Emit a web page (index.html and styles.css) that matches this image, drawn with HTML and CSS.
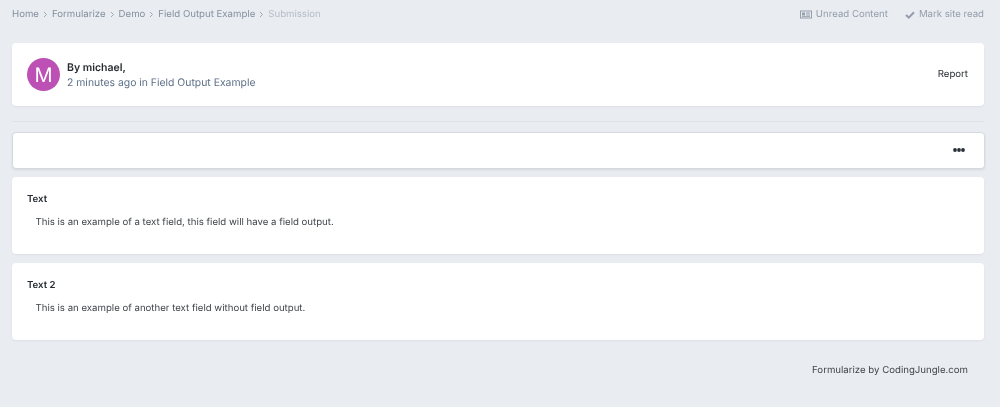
FILE: index.html
```html
<!DOCTYPE html>
<html lang="en">
<head>
<meta charset="utf-8">
<title>Submission</title>
<link rel="stylesheet" href="styles.css">
</head>
<body>
<div class="page">
  <nav class="topbar">
    <ul class="crumbs">
      <li class="crumb">Home</li>
      <li class="sep"><svg viewBox="0 0 6 8" width="5" height="7"><path d="M1.2 1 L4.2 4 L1.2 7" fill="none" stroke="currentColor" stroke-width="1"/></svg></li>
      <li class="crumb">Formularize</li>
      <li class="sep"><svg viewBox="0 0 6 8" width="5" height="7"><path d="M1.2 1 L4.2 4 L1.2 7" fill="none" stroke="currentColor" stroke-width="1"/></svg></li>
      <li class="crumb">Demo</li>
      <li class="sep"><svg viewBox="0 0 6 8" width="5" height="7"><path d="M1.2 1 L4.2 4 L1.2 7" fill="none" stroke="currentColor" stroke-width="1"/></svg></li>
      <li class="crumb">Field Output Example</li>
      <li class="sep"><svg viewBox="0 0 6 8" width="5" height="7"><path d="M1.2 1 L4.2 4 L1.2 7" fill="none" stroke="currentColor" stroke-width="1"/></svg></li>
      <li class="crumb current">Submission</li>
    </ul>
    <ul class="actions">
      <li class="action">
        <svg class="icon-news" viewBox="0 0 12 9" width="12" height="9"><path d="M0 0.5h12v8h-12z M1 1.5v6h10v-6z" fill="currentColor" fill-rule="evenodd"/><rect x="2" y="2.5" width="3" height="3" fill="currentColor"/><rect x="6" y="2.5" width="4" height="1" fill="currentColor"/><rect x="6" y="4.5" width="4" height="1" fill="currentColor"/><rect x="2" y="6.2" width="8" height="0.8" fill="currentColor"/></svg>
        Unread Content
      </li>
      <li class="action">
        <svg class="icon-check" viewBox="0 0 10 8" width="10" height="8"><path d="M1 4 L3.8 6.6 L9 1.2" fill="none" stroke="currentColor" stroke-width="2"/></svg>
        Mark site read
      </li>
    </ul>
  </nav>

  <section class="card author">
    <div class="avatar">M</div>
    <div class="author-text">
      <div class="by">By michael,</div>
      <div class="meta">2 minutes ago in Field Output Example</div>
    </div>
    <div class="report">Report</div>
  </section>

  <hr class="rule">

  <div class="toolbar">
    <svg class="dots" viewBox="0 0 12 4" width="12" height="4"><circle cx="2" cy="2" r="1.9"/><circle cx="6" cy="2" r="1.9"/><circle cx="10" cy="2" r="1.9"/></svg>
  </div>

  <section class="card field">
    <h3 class="field-title">Text</h3>
    <p class="field-value">This is an example of a text field, this field will have a field output.</p>
  </section>

  <section class="card field">
    <h3 class="field-title">Text 2</h3>
    <p class="field-value">This is an example of another text field without field output.</p>
  </section>

  <footer class="credit">Formularize by CodingJungle.com</footer>
</div>
</body>
</html>
```

FILE: styles.css
```css
* { box-sizing: border-box; }
html, body { margin: 0; padding: 0; }
body {
  background: #e9ecf1;
  font-family: Inter, "Liberation Sans", sans-serif;
  font-size: 9.65px;
  color: #353c41;
  text-rendering: geometricPrecision;
}
.page {
  height: 407px;
  padding: 0 16px 0 12px;
  overflow: hidden;
  will-change: transform;
}
.topbar {
  height: 43px;
  padding-bottom: 14px;
  display: flex;
  justify-content: space-between;
  align-items: center;
}
.crumbs, .actions {
  list-style: none;
  margin: 0;
  padding: 0;
  display: flex;
  align-items: center;
}
.crumbs { color: #84909f; gap: 4px; }
.sep { display: flex; color: #8f9aa8; }
.crumb.current { color: #b5bdc8; }
.actions { color: #949eab; gap: 17px; }
.action { display: flex; align-items: center; gap: 4px; }
.card {
  background: #fff;
  border-radius: 4px;
  box-shadow: 0 1px 2px rgba(60, 70, 90, 0.08);
}
.author {
  height: 63px;
  padding: 0 16px 0 15px;
  display: flex;
  align-items: center;
  gap: 7px;
}
.avatar {
  width: 33px;
  height: 33px;
  border-radius: 50%;
  background: #bd50b4;
  color: #fff;
  font-size: 20px;
  display: flex;
  align-items: center;
  justify-content: center;
}
.author-text { flex: 1; line-height: 15px; }
.by { font-weight: 600; font-size: 10.5px; color: #262b30; }
.meta { color: #5d7088; font-size: 10.4px; }
.report { color: #262b30; }
.rule {
  border: 0;
  border-top: 1px solid #dde1e8;
  margin: 15px 0 10px;
}
.toolbar {
  height: 37px;
  margin-left: -0.5px;
  margin-right: -0.5px;
  background: #fff;
  border: 1px solid #d5dae1;
  border-radius: 4px;
  box-shadow: 0 1px 2px rgba(60, 70, 90, 0.12);
  display: flex;
  align-items: center;
  justify-content: flex-end;
  padding: 0 18.5px 1px 0;
}
.dots { fill: #2a3038; }
.field {
  margin-top: 9px;
  height: 77px;
  padding: 16px 15px;
}
.toolbar + .field { margin-top: 8px; }
.field-title {
  margin: 0;
  font-size: 9.65px;
  font-weight: 600;
  line-height: 14px;
  color: #262b30;
}
.field-value {
  margin: 9px 0 0 8.5px;
  line-height: 14px;
  color: #40464c;
}
.credit {
  margin-top: 24px;
  padding-right: 16px;
  text-align: right;
  line-height: 14px;
  color: #40464c;
}
```
